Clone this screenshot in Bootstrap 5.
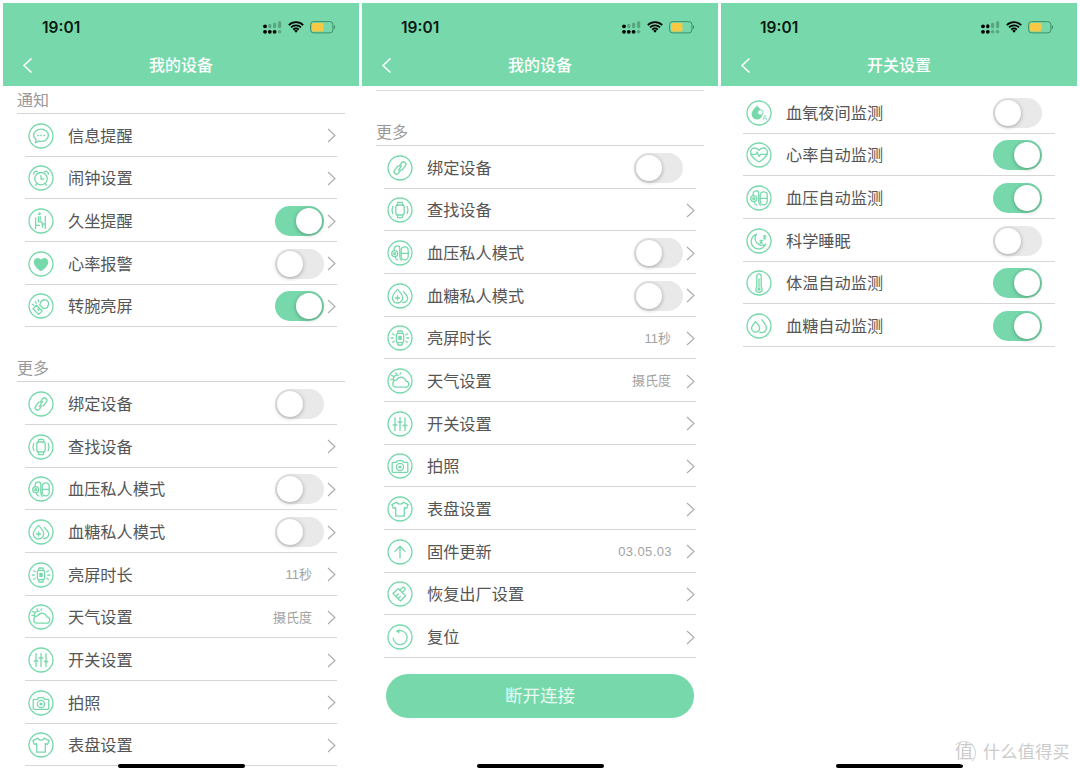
<!DOCTYPE html>
<html lang="zh">
<head>
    <meta charset="UTF-8">
    <meta name="viewport" content="width=device-width, initial-scale=1.0">
    <title>我的设备</title>
    <link href="https://cdn.jsdelivr.net/npm/bootstrap@5.3.0/dist/css/bootstrap.min.css" rel="stylesheet">
    <style>
        html, body { height: 776px; overflow: hidden; }
        body {
            background: #fff;
            font-family: "Liberation Sans", "Noto Sans CJK SC", sans-serif;
            color: #555;
            padding: 3px 3px 0;
        }
        .phones { gap: 3px; height: 773px; }
        .phone { width: 356px; height: 773px; position: relative; overflow: hidden; flex: none; }
        .appbar { height: 83px; background: #77d9ab; position: relative; flex: none; }
        .statusline { height: 48px; padding-left: 39px; }
        .clock { font: 600 15.5px "Inter", sans-serif; color: #0c1a12; width: 221px; flex: none; }
        .wifi-i, .batt-i { margin-left: 6px; }
        .titleline { height: 35px; position: relative; }
        .apptitle { color: #fff; font-size: 16px; font-weight: 500; line-height: 29px; }
        .backbtn { position: absolute; left: 19px; top: 6px; }
        .sect { padding: 0 14px; }
        .sect-title { font-size: 16px; line-height: 20px; color: #999; border-bottom: 1px solid #d4d4d4; height: 28px; padding-top: 5px; }
        .sect-gap { margin-top: 27px; }
        .top-rule { margin: 4px 14px 0; border-top: 1px solid #dcdcdc; height: 28px; flex: none; }
        .rows { --bs-list-group-border-radius: 0; padding: 0 22px; margin: 0; }
        .rowitem { height: 42.66px; border: 0; border-bottom: 1px solid #d6d6d6; padding: 2px 0 0 3px; background: transparent; color: #555; font-size: 16.2px; }
        .rowicon { width: 26px; height: 26px; flex: none; margin-right: 14px; }
        .rowlabel { flex: 1 1 auto; white-space: nowrap; }
        .rowvalue { font-size: 13px; color: #a3a3a3; margin-right: 13px; }
        .ver { letter-spacing: .4px; margin-right: 12px; }
        .chev { flex: none; width: 9px; height: 15px; margin-right: 1px; margin-left: 2px; }
        .ios-switch { width: 49px; height: 30px; border-radius: 15px; background: #e9e9e9; position: relative; flex: none; margin-right: 1px; }
        .ios-switch::after { content: ""; position: absolute; top: 2px; left: 2px; width: 26px; height: 26px; border-radius: 50%; background: #fff; box-shadow: 0 1px 4px rgba(0,0,0,.3); }
        .ios-switch.on { background: #77d9ab; }
        .ios-switch.on::after { left: 21px; }
        .disconnect { display: block; width: 308px; height: 44px; margin: 16px auto 0; border: 0; border-radius: 22px; background: #77d9ab; color: #e8fbf2; font-size: 17.5px; line-height: 44px; padding: 0; }
        .homebar { position: absolute; left: 115px; bottom: 8px; width: 127px; height: 4px; border-radius: 2px; background: #000; }
        .rows-plain { padding-top: 5px; }
        .rows-plain .ios-switch { margin-right: 13px; }
        .i { fill: none; stroke: #77d9ab; stroke-width: 1.3; stroke-linecap: round; stroke-linejoin: round; }
        .watermark { position: absolute; right: 7px; bottom: 11px; color: #cbcbcb; font-size: 17px; letter-spacing: .4px; line-height: 22px; z-index: 2; }
        .wm-badge { display: inline-block; width: 24px; height: 24px; border: 1px solid #d4d4d4; border-left-color: #fff; border-bottom-color: #fff; border-radius: 50%; background: #fff; font-size: 18px; line-height: 21px; text-align: center; margin-right: 7px; letter-spacing: 0; flex: none; }
    </style>
</head>
<body>
    <svg width="0" height="0" class="position-absolute">
        <defs>
            <symbol id="chevron" viewBox="0 0 9 15"><path d="M1 1l7 6.5-7 6.5" fill="none" stroke="#aaa" stroke-width="1.1"/></symbol>
            <symbol id="back" viewBox="0 0 11 17"><path d="M9.5 1.5L2 8.5l7.5 7" fill="none" stroke="#fff" stroke-width="1.6"/></symbol>
            <symbol id="wifi" viewBox="0 0 16 12">
                <path d="M.8 4.1a10.2 10.2 0 0 1 14.4 0M3 6.4a7 7 0 0 1 10 0M5.2 8.6a3.9 3.9 0 0 1 5.6 0" fill="none" stroke="#000" stroke-width="1.7"/>
                <path d="M8 11.8L6.2 9.8a2.5 2.5 0 0 1 3.6 0z" fill="#000"/>
            </symbol>
            <symbol id="battery" viewBox="0 0 26 13">
                <rect x=".6" y=".6" width="22.3" height="11.3" rx="3" fill="none" stroke="#3f8f6a" stroke-width="1"/>
                <rect x="2" y="2" width="11.5" height="8.5" rx="1.4" fill="#f7c843"/>
                <path d="M24.4 4.6v3.2" stroke="#3f8f6a" stroke-width="1.2"/>
            </symbol>
            <symbol id="signal" viewBox="0 0 19 13">
                <circle cx="2" cy="5.3" r="1.9" fill="#000"/><rect x="5.2" y="3" width="3.2" height="4.2" rx="1.4" fill="#58a581"/><rect x="10" y="1.8" width="3.2" height="5.4" rx="1.4" fill="#58a581"/><rect x="15" y=".2" width="3.2" height="7" rx="1.4" fill="#58a581"/>
                <circle cx="2" cy="10.8" r="1.9" fill="#000"/><circle cx="6.8" cy="10.8" r="1.9" fill="#000"/><circle cx="11.6" cy="10.8" r="1.9" fill="#000"/><circle cx="16.6" cy="10.8" r="1.8" fill="#58a581"/>
            </symbol>
            <symbol id="signal2" viewBox="0 0 19 13">
                <circle cx="2" cy="5.3" r="1.9" fill="#000"/><rect x="5.2" y="3.2" width="3.2" height="4" rx="1.5" fill="#000"/><rect x="10" y="1.8" width="3.2" height="5.4" rx="1.4" fill="#58a581"/><rect x="15" y=".2" width="3.2" height="7" rx="1.4" fill="#58a581"/>
                <circle cx="2" cy="10.8" r="1.9" fill="#000"/><circle cx="6.8" cy="10.8" r="1.9" fill="#000"/><circle cx="11.6" cy="10.8" r="1.8" fill="#58a581"/><circle cx="16.6" cy="10.8" r="1.8" fill="#58a581"/>
            </symbol>
            <symbol id="ic-msg" viewBox="0 0 26 26"><circle class="i" cx="13" cy="13" r="12"/><path class="i" d="M5.6 12.3c0-3.5 3.3-6.1 7.4-6.1s7.4 2.6 7.4 6.1-3.3 6.1-7.4 6.1c-.8 0-1.5-.1-2.2-.3l-3.4 1.6.7-3.2C6.6 15.5 5.6 14 5.6 12.3z"/><path d="M10 12.3h.01M13 12.3h.01M16 12.3h.01" stroke="#77d9ab" stroke-width="1.7" stroke-linecap="round"/></symbol>
            <symbol id="ic-alarm" viewBox="0 0 26 26"><circle class="i" cx="13" cy="13" r="12"/><circle class="i" cx="13" cy="13.7" r="6.2"/><path class="i" d="M13 10.4v3.6h2.8M5.7 9.2a2.5 2.5 0 0 1 3.7-2.6M20.3 9.2a2.5 2.5 0 0 0-3.7-2.6M8.8 18.6l-1.2 1.5M17.2 18.6l1.2 1.5"/></symbol>
            <symbol id="ic-sit" viewBox="0 0 26 26"><circle class="i" cx="13" cy="13" r="12"/><circle cx="11.5" cy="5.9" r="1.4" fill="#77d9ab"/><path class="i" d="M10.4 8.6v5.2h3.4l.8 5.2M12.2 8.6v3.4M7.6 10v7.4h4M7.6 17.4v3M17.3 8.4v12.2M14 16h3.3"/></symbol>
            <symbol id="ic-heart" viewBox="0 0 26 26"><circle class="i" cx="13" cy="13" r="12"/><path d="M13 20.2c-.4 0-7.3-4.6-7.3-9.3 0-2.3 1.8-4 3.9-4 1.4 0 2.6.7 3.4 1.9.8-1.2 2-1.9 3.4-1.9 2.1 0 3.9 1.7 3.9 4 0 4.7-6.9 9.3-7.3 9.3z" fill="#77d9ab"/></symbol>
            <symbol id="ic-wrist" viewBox="0 0 26 26"><circle class="i" cx="13" cy="13" r="12"/><path class="i" d="M12.3 10.2c.8-2.5 2.7-3.7 5-3.4 2.4.3 3.6 2.2 3.2 4.6-.3 2-1.2 3.6-3.2 3.9l-2 .2-3.6-3.7z"/><path class="i" d="M8.5 12.3l5.7 5.7-3.6 3.4-5.6-5.6zM4.3 11.3l1.6 1M7.3 8.6l.8 1.7M10.3 7l.2 1.6"/><path d="M9.6 15.7l1.6 1.6" stroke="#77d9ab" stroke-width="1.8"/></symbol>
            <symbol id="ic-link" viewBox="0 0 26 26"><circle class="i" cx="13" cy="13" r="12"/><path class="i" d="M12 11.4l2.5-3.5a2.4 2.4 0 0 1 3.9 2.8l-3 4.2M14 14.6l-2.5 3.5a2.4 2.4 0 0 1-3.9-2.8l3-4.2M14.6 10.4l-3.2 5.2"/></symbol>
            <symbol id="ic-find" viewBox="0 0 26 26"><circle class="i" cx="13" cy="13" r="12"/><rect class="i" x="8.8" y="8" width="8.4" height="10" rx="2.2"/><path class="i" d="M10.2 8l.5-2.6h4.6l.5 2.6M10.2 18l.5 2.6h4.6l.5-2.6M5.8 9.4a8.6 8.6 0 0 0 0 7.2M20.2 9.4a8.6 8.6 0 0 1 0 7.2"/></symbol>
            <symbol id="ic-bp" viewBox="0 0 26 26"><circle class="i" cx="13" cy="13" r="12"/><circle class="i" cx="7.7" cy="13.6" r="3"/><circle class="i" cx="7.7" cy="13.6" r="1"/><rect class="i" x="14.2" y="6.8" width="7" height="13" rx="3.5"/><path class="i" d="M14.2 13.3h7M7 10.6c0-3 1.2-4.8 3.4-4.8 1.6 0 2.4 1.2 2.4 2.8v8c0 1.7.5 2.9 1.6 3.7M8.3 16.6c.2 1.9 1 3 2.4 3.5"/></symbol>
            <symbol id="ic-sugarp" viewBox="0 0 26 26"><circle class="i" cx="13" cy="13" r="12"/><path class="i" d="M10.5 6.4c2.4 2.6 5.2 5.4 5.2 8.4a5.2 5.2 0 0 1-10.4 0c0-3 2.8-5.8 5.2-8.4z"/><path class="i" d="M16.4 8.4c1.9 2.1 4.3 4.3 4.3 6.9a4.2 4.2 0 0 1-5 4.1"/><path class="i" d="M8.4 15h4.2M10.5 12.9v4.2"/></symbol>
            <symbol id="ic-screen" viewBox="0 0 26 26"><circle class="i" cx="13" cy="13" r="12"/><rect class="i" x="9.4" y="8.3" width="7.2" height="9.4" rx="1.6"/><path class="i" d="M10.6 8.3l.4-2.3h4l.4 2.3M10.6 17.7l.4 2.3h4l.4-2.3"/><rect x="11.3" y="10.8" width="3.4" height="4.2" fill="#77d9ab"/><path class="i" d="M4.2 13h2M19.8 13h2M5.6 8.8l1.6 1M20.4 8.8l-1.6 1M5.6 17.2l1.6-1M20.4 17.2l-1.6-1"/></symbol>
            <symbol id="ic-weather" viewBox="0 0 26 26"><circle class="i" cx="13" cy="13" r="12"/><path class="i" d="M8.7 19.2h9.8a3 3 0 0 0 .5-6 5 5 0 0 0-9.3-1.3 3.7 3.7 0 0 0-1 7.3z"/><path class="i" d="M6.6 12.6a3.8 3.8 0 0 1 4.6-5.2M9 4.8l.5 1.4M4.6 7.4l1.4.7M3.9 11.6l1.4-.2M13.6 4.9l-.6 1.3"/></symbol>
            <symbol id="ic-sliders" viewBox="0 0 26 26"><circle class="i" cx="13" cy="13" r="12"/><path class="i" d="M8 6.6v12.8M13 6.6v12.8M18 6.6v12.8"/><path d="M6.3 14h3.4M11.3 11h3.4M16.3 14.5h3.4" stroke="#77d9ab" stroke-width="1.6" stroke-linecap="round"/></symbol>
            <symbol id="ic-camera" viewBox="0 0 26 26"><circle class="i" cx="13" cy="13" r="12"/><path class="i" d="M6 9.4h3.4l1.2-1.8h4.8l1.2 1.8H20a.8.8 0 0 1 .8.8v8.4a.8.8 0 0 1-.8.8H6a.8.8 0 0 1-.8-.8v-8.4a.8.8 0 0 1 .8-.8z"/><circle class="i" cx="13" cy="14" r="3.6"/><circle cx="13" cy="14" r="1.6" fill="#77d9ab"/></symbol>
            <symbol id="ic-shirt" viewBox="0 0 26 26"><circle class="i" cx="13" cy="13" r="12"/><path class="i" d="M9.8 6.2L4.9 8.6l1.6 3.8 2.2-.8v8.6h8.6v-8.6l2.2.8 1.6-3.8-4.9-2.4c-.5 2.6-5.9 2.6-6.4 0z"/></symbol>
            <symbol id="ic-up" viewBox="0 0 26 26"><circle class="i" cx="13" cy="13" r="12"/><path class="i" d="M13 19V7.4M8 12.2l5-5 5 5"/></symbol>
            <symbol id="ic-brush" viewBox="0 0 26 26"><circle class="i" cx="13" cy="13" r="12"/><path class="i" d="M15.4 11.4l2.3-2.4a1.6 1.6 0 0 0-2.3-2.3l-2.4 2.3"/><path class="i" d="M11.4 7.6l7.2 7.2-5.2 5.2-7.4-7.4 5.4-5zM9 15.4l2.4-2.4M11 17.8l2.4-2.4"/></symbol>
            <symbol id="ic-reset" viewBox="0 0 26 26"><circle class="i" cx="13" cy="13" r="12"/><path class="i" d="M10.4 7.2a7 7 0 1 1-4.2 7"/><path d="M12.4 4.8v4.8L8.8 7.2z" fill="#77d9ab"/></symbol>
            <symbol id="ic-oxy" viewBox="0 0 26 26"><circle class="i" cx="13" cy="13" r="12"/><path d="M11 5.6c2.2 2.5 5.4 5.4 5.4 8.6a5.4 5.4 0 0 1-10.8 0c0-3.2 3.2-6.1 5.4-8.6z" fill="#77d9ab"/><circle cx="14.4" cy="12.4" r="2.7" fill="#fff" stroke="#77d9ab"/><text x="16.5" y="20" font-size="6.5" fill="#77d9ab">A</text></symbol>
            <symbol id="ic-rate" viewBox="0 0 26 26"><circle class="i" cx="13" cy="13" r="12"/><path class="i" d="M13 20c-1-.5-8.4-4.6-8.4-10 0-2.4 1.9-4 4-4 1.9 0 3.4 1 4.4 2.4C14 7 15.5 6 17.4 6c2.1 0 4 1.6 4 4 0 5.4-7.4 9.5-8.4 10z"/><path class="i" d="M4.8 12.4h5l1.3-2.4 2 4.4 1.5-2h6.6"/></symbol>
            <symbol id="ic-moon" viewBox="0 0 26 26"><circle class="i" cx="13" cy="13" r="12"/><path class="i" d="M10.5 6.4a7.4 7.4 0 1 0 9 9.8 6.8 6.8 0 0 1-9-9.8z"/><path class="i" d="M14 12.4h2.4L14 15h2.4M17.6 8h2.2l-2.2 2.8h2.2" stroke-width="1"/></symbol>
            <symbol id="ic-temp" viewBox="0 0 26 26"><circle class="i" cx="13" cy="13" r="12"/><path class="i" d="M10.8 6a2.2 2.2 0 0 1 4.4 0v11a3.2 3.2 0 1 1-4.4 0z"/><path class="i" d="M13 9v8"/><circle cx="13" cy="19.2" r="1.6" fill="#77d9ab"/></symbol>
            <symbol id="ic-sugar" viewBox="0 0 26 26"><circle class="i" cx="13" cy="13" r="12"/><path class="i" d="M9.6 8.6c1.7 2 4 4.1 4 6.5a4 4 0 0 1-8 0c0-2.4 2.3-4.5 4-6.5z"/><path class="i" d="M15.8 6.8c2 2.5 4.6 5 4.6 8a4.7 4.7 0 0 1-6.8 4.3"/></symbol>
        </defs>
    </svg>

    <div class="phones d-flex">

        <!-- left: device page, top of list -->
        <div class="phone d-flex flex-column">
            <div class="appbar">
                <div class="statusline d-flex align-items-center">
                    <span class="clock">19:01</span>
                    <svg width="19" height="13"><use href="#signal"/></svg>
                    <svg class="wifi-i" width="16" height="12"><use href="#wifi"/></svg>
                    <svg class="batt-i" width="26" height="13"><use href="#battery"/></svg>
                </div>
                <div class="titleline text-center">
                    <svg class="backbtn" width="11" height="17"><use href="#back"/></svg>
                    <span class="apptitle">我的设备</span>
                </div>
            </div>

            <div class="sect"><div class="sect-title">通知</div></div>
            <ul class="list-group rows">
                <li class="list-group-item rowitem d-flex align-items-center"><svg class="rowicon"><use href="#ic-msg"/></svg><span class="rowlabel">信息提醒</span><svg class="chev"><use href="#chevron"/></svg></li>
                <li class="list-group-item rowitem d-flex align-items-center"><svg class="rowicon"><use href="#ic-alarm"/></svg><span class="rowlabel">闹钟设置</span><svg class="chev"><use href="#chevron"/></svg></li>
                <li class="list-group-item rowitem d-flex align-items-center"><svg class="rowicon"><use href="#ic-sit"/></svg><span class="rowlabel">久坐提醒</span><span class="ios-switch on"></span><svg class="chev"><use href="#chevron"/></svg></li>
                <li class="list-group-item rowitem d-flex align-items-center"><svg class="rowicon"><use href="#ic-heart"/></svg><span class="rowlabel">心率报警</span><span class="ios-switch"></span><svg class="chev"><use href="#chevron"/></svg></li>
                <li class="list-group-item rowitem d-flex align-items-center"><svg class="rowicon"><use href="#ic-wrist"/></svg><span class="rowlabel">转腕亮屏</span><span class="ios-switch on"></span><svg class="chev"><use href="#chevron"/></svg></li>
            </ul>

            <div class="sect sect-gap"><div class="sect-title">更多</div></div>
            <ul class="list-group rows">
                <li class="list-group-item rowitem d-flex align-items-center"><svg class="rowicon"><use href="#ic-link"/></svg><span class="rowlabel">绑定设备</span><span class="ios-switch"></span><svg class="chev invisible"></svg></li>
                <li class="list-group-item rowitem d-flex align-items-center"><svg class="rowicon"><use href="#ic-find"/></svg><span class="rowlabel">查找设备</span><svg class="chev"><use href="#chevron"/></svg></li>
                <li class="list-group-item rowitem d-flex align-items-center"><svg class="rowicon"><use href="#ic-bp"/></svg><span class="rowlabel">血压私人模式</span><span class="ios-switch"></span><svg class="chev"><use href="#chevron"/></svg></li>
                <li class="list-group-item rowitem d-flex align-items-center"><svg class="rowicon"><use href="#ic-sugarp"/></svg><span class="rowlabel">血糖私人模式</span><span class="ios-switch"></span><svg class="chev"><use href="#chevron"/></svg></li>
                <li class="list-group-item rowitem d-flex align-items-center"><svg class="rowicon"><use href="#ic-screen"/></svg><span class="rowlabel">亮屏时长</span><span class="rowvalue">11秒</span><svg class="chev"><use href="#chevron"/></svg></li>
                <li class="list-group-item rowitem d-flex align-items-center"><svg class="rowicon"><use href="#ic-weather"/></svg><span class="rowlabel">天气设置</span><span class="rowvalue">摄氏度</span><svg class="chev"><use href="#chevron"/></svg></li>
                <li class="list-group-item rowitem d-flex align-items-center"><svg class="rowicon"><use href="#ic-sliders"/></svg><span class="rowlabel">开关设置</span><svg class="chev"><use href="#chevron"/></svg></li>
                <li class="list-group-item rowitem d-flex align-items-center"><svg class="rowicon"><use href="#ic-camera"/></svg><span class="rowlabel">拍照</span><svg class="chev"><use href="#chevron"/></svg></li>
                <li class="list-group-item rowitem d-flex align-items-center"><svg class="rowicon"><use href="#ic-shirt"/></svg><span class="rowlabel">表盘设置</span><svg class="chev"><use href="#chevron"/></svg></li>
            </ul>
            <div class="homebar"></div>
        </div>

        <!-- middle: device page, scrolled down -->
        <div class="phone d-flex flex-column">
            <div class="appbar">
                <div class="statusline d-flex align-items-center">
                    <span class="clock">19:01</span>
                    <svg width="19" height="13"><use href="#signal"/></svg>
                    <svg class="wifi-i" width="16" height="12"><use href="#wifi"/></svg>
                    <svg class="batt-i" width="26" height="13"><use href="#battery"/></svg>
                </div>
                <div class="titleline text-center">
                    <svg class="backbtn" width="11" height="17"><use href="#back"/></svg>
                    <span class="apptitle">我的设备</span>
                </div>
            </div>

            <div class="top-rule"></div>
            <div class="sect"><div class="sect-title">更多</div></div>
            <ul class="list-group rows">
                <li class="list-group-item rowitem d-flex align-items-center"><svg class="rowicon"><use href="#ic-link"/></svg><span class="rowlabel">绑定设备</span><span class="ios-switch"></span><svg class="chev invisible"></svg></li>
                <li class="list-group-item rowitem d-flex align-items-center"><svg class="rowicon"><use href="#ic-find"/></svg><span class="rowlabel">查找设备</span><svg class="chev"><use href="#chevron"/></svg></li>
                <li class="list-group-item rowitem d-flex align-items-center"><svg class="rowicon"><use href="#ic-bp"/></svg><span class="rowlabel">血压私人模式</span><span class="ios-switch"></span><svg class="chev"><use href="#chevron"/></svg></li>
                <li class="list-group-item rowitem d-flex align-items-center"><svg class="rowicon"><use href="#ic-sugarp"/></svg><span class="rowlabel">血糖私人模式</span><span class="ios-switch"></span><svg class="chev"><use href="#chevron"/></svg></li>
                <li class="list-group-item rowitem d-flex align-items-center"><svg class="rowicon"><use href="#ic-screen"/></svg><span class="rowlabel">亮屏时长</span><span class="rowvalue">11秒</span><svg class="chev"><use href="#chevron"/></svg></li>
                <li class="list-group-item rowitem d-flex align-items-center"><svg class="rowicon"><use href="#ic-weather"/></svg><span class="rowlabel">天气设置</span><span class="rowvalue">摄氏度</span><svg class="chev"><use href="#chevron"/></svg></li>
                <li class="list-group-item rowitem d-flex align-items-center"><svg class="rowicon"><use href="#ic-sliders"/></svg><span class="rowlabel">开关设置</span><svg class="chev"><use href="#chevron"/></svg></li>
                <li class="list-group-item rowitem d-flex align-items-center"><svg class="rowicon"><use href="#ic-camera"/></svg><span class="rowlabel">拍照</span><svg class="chev"><use href="#chevron"/></svg></li>
                <li class="list-group-item rowitem d-flex align-items-center"><svg class="rowicon"><use href="#ic-shirt"/></svg><span class="rowlabel">表盘设置</span><svg class="chev"><use href="#chevron"/></svg></li>
                <li class="list-group-item rowitem d-flex align-items-center"><svg class="rowicon"><use href="#ic-up"/></svg><span class="rowlabel">固件更新</span><span class="rowvalue ver">03.05.03</span><svg class="chev"><use href="#chevron"/></svg></li>
                <li class="list-group-item rowitem d-flex align-items-center"><svg class="rowicon"><use href="#ic-brush"/></svg><span class="rowlabel">恢复出厂设置</span><svg class="chev"><use href="#chevron"/></svg></li>
                <li class="list-group-item rowitem d-flex align-items-center"><svg class="rowicon"><use href="#ic-reset"/></svg><span class="rowlabel">复位</span><svg class="chev"><use href="#chevron"/></svg></li>
            </ul>
            <button type="button" class="btn disconnect">断开连接</button>
            <div class="homebar"></div>
        </div>

        <!-- right: switch settings -->
        <div class="phone d-flex flex-column">
            <div class="appbar">
                <div class="statusline d-flex align-items-center">
                    <span class="clock">19:01</span>
                    <svg width="19" height="13"><use href="#signal2"/></svg>
                    <svg class="wifi-i" width="16" height="12"><use href="#wifi"/></svg>
                    <svg class="batt-i" width="26" height="13"><use href="#battery"/></svg>
                </div>
                <div class="titleline text-center">
                    <svg class="backbtn" width="11" height="17"><use href="#back"/></svg>
                    <span class="apptitle">开关设置</span>
                </div>
            </div>

            <ul class="list-group rows rows-plain">
                <li class="list-group-item rowitem d-flex align-items-center"><svg class="rowicon"><use href="#ic-oxy"/></svg><span class="rowlabel">血氧夜间监测</span><span class="ios-switch"></span></li>
                <li class="list-group-item rowitem d-flex align-items-center"><svg class="rowicon"><use href="#ic-rate"/></svg><span class="rowlabel">心率自动监测</span><span class="ios-switch on"></span></li>
                <li class="list-group-item rowitem d-flex align-items-center"><svg class="rowicon"><use href="#ic-bp"/></svg><span class="rowlabel">血压自动监测</span><span class="ios-switch on"></span></li>
                <li class="list-group-item rowitem d-flex align-items-center"><svg class="rowicon"><use href="#ic-moon"/></svg><span class="rowlabel">科学睡眠</span><span class="ios-switch"></span></li>
                <li class="list-group-item rowitem d-flex align-items-center"><svg class="rowicon"><use href="#ic-temp"/></svg><span class="rowlabel">体温自动监测</span><span class="ios-switch on"></span></li>
                <li class="list-group-item rowitem d-flex align-items-center"><svg class="rowicon"><use href="#ic-sugar"/></svg><span class="rowlabel">血糖自动监测</span><span class="ios-switch on"></span></li>
            </ul>
            <div class="homebar"></div>
            <div class="watermark d-flex align-items-center"><span class="wm-badge">值</span>什么值得买</div>
        </div>
    </div>

    <script src="https://cdn.jsdelivr.net/npm/bootstrap@5.3.0/dist/js/bootstrap.bundle.min.js"></script>
</body>
</html>
